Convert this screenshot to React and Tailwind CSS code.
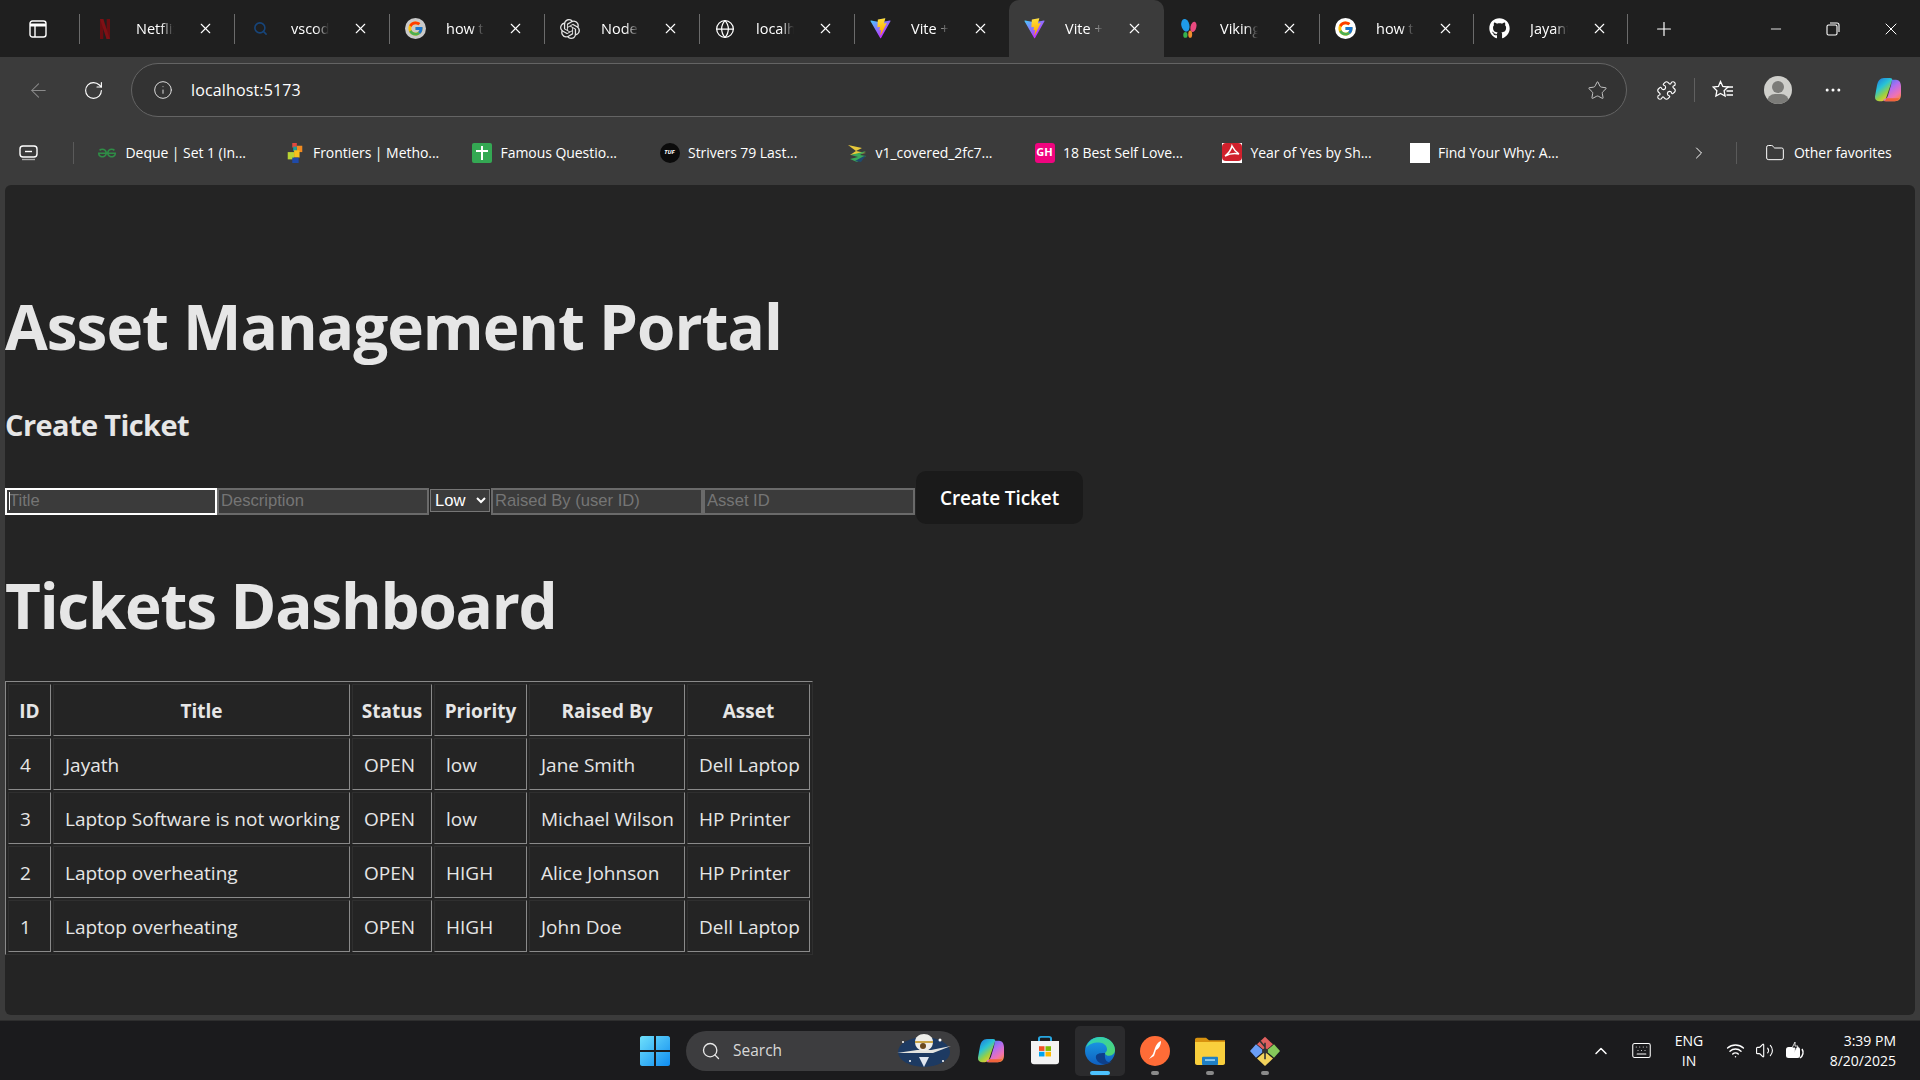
import React from "react";
import { X, Search, Globe, ArrowLeft, RotateCw, Info, Star, Puzzle, MoreHorizontal, ChevronRight, Folder, Plus, Minus, ChevronUp, Keyboard, Wifi, Volume2 } from "lucide-react";
import { FcGoogle } from "react-icons/fc";
import { FaGithub } from "react-icons/fa";
import { SiOpenai, SiGeeksforgeeks } from "react-icons/si";

const Vite = () => (
  <svg width="21" height="21" viewBox="0 0 410 404" fill="none">
    <defs>
      <linearGradient id="v1" x1="6" y1="33" x2="235" y2="344" gradientUnits="userSpaceOnUse"><stop stopColor="#41D1FF" /><stop offset="1" stopColor="#BD34FE" /></linearGradient>
      <linearGradient id="v2" x1="194" y1="8" x2="236" y2="293" gradientUnits="userSpaceOnUse"><stop stopColor="#FFEA83" /><stop offset="0.08" stopColor="#FFDD35" /><stop offset="1" stopColor="#FFA800" /></linearGradient>
    </defs>
    <path d="M399.641 59.5246L215.643 388.545C211.844 395.338 202.084 395.378 198.228 388.618L10.5817 59.5563C6.38087 52.1896 12.6802 43.2665 21.0281 44.7586L205.223 77.6824C206.398 77.8924 207.601 77.8904 208.776 77.6763L389.119 44.8058C397.439 43.2894 403.768 52.1434 399.641 59.5246Z" fill="url(#v1)" />
    <path d="M292.965 1.5744L156.801 28.2552C154.563 28.6937 152.906 30.5903 152.771 32.8664L144.395 174.33C144.198 177.662 147.258 180.248 150.51 179.498L188.42 170.749C191.967 169.931 195.172 173.055 194.443 176.622L183.18 231.775C182.422 235.487 185.907 238.661 189.532 237.56L212.947 230.446C216.577 229.344 220.065 232.527 219.297 236.242L201.398 322.875C200.278 328.294 207.486 331.249 210.492 326.603L212.5 323.5L323.454 102.072C325.312 98.3645 322.108 94.137 318.036 94.9228L279.014 102.454C275.347 103.161 272.227 99.746 273.262 96.1583L298.731 7.86689C299.767 4.27314 296.636 0.855181 292.965 1.5744Z" fill="url(#v2)" />
  </svg>
);
const Netflix = () => (
  <svg width="12" height="20" viewBox="0 0 14 24"><path d="M1 0h4v24l-4 .5z" fill="#6a0d11" /><path d="M9 0h4v24.5l-4-.5z" fill="#6a0d11" /><path d="M1 0h4l8 24.5h-4z" fill="#7f1015" /></svg>
);
const Viking = () => (
  <svg width="20" height="21" viewBox="0 0 21 26">
    <ellipse cx="6" cy="9" rx="5" ry="8" fill="#1f9be8" transform="rotate(-12 6 9)" />
    <ellipse cx="16" cy="11" rx="3.6" ry="6.5" fill="#e94a7f" transform="rotate(14 16 11)" />
    <ellipse cx="6" cy="21" rx="2.6" ry="3.6" fill="#37b24d" />
    <ellipse cx="12" cy="20" rx="2.4" ry="4.6" fill="#f08c2e" />
  </svg>
);
const Copilot = ({ w = 28, h = 25 }) => (
  <svg width={w} height={h} viewBox="0 0 28 28" preserveAspectRatio="none">
    <defs>
      <linearGradient id="c1" x1="0" y1="0" x2="0.6" y2="1"><stop stopColor="#1b6fe0" /><stop offset="0.45" stopColor="#29c3d6" /><stop offset="0.75" stopColor="#9bd13f" /><stop offset="1" stopColor="#f5c33b" /></linearGradient>
      <linearGradient id="c2" x1="0.2" y1="0" x2="0.8" y2="1"><stop stopColor="#3f7ff0" /><stop offset="0.4" stopColor="#b36df0" /><stop offset="0.75" stopColor="#f272b0" /><stop offset="1" stopColor="#f58a3c" /></linearGradient>
    </defs>
    <path d="M10 1h6c2 0 2.600 1.400 2 3l-6 19c-.6 2-2 3-4 3H5C2 26 .8 24 1 21L3 9C4 4 6 1 10 1z" fill="url(#c1)" />
    <path d="M18 3h4c3 0 5 3 5 7v9c0 4-2 7-6 7h-9c-2 0-3-1-2-2 2 0 3-1 4-4l3-11c.4-2 .6-5 1-6z" fill="url(#c2)" />
    <path d="M10 26h11c2 0 3.400-1 4.400-3l-13 0c-.6 2-1.400 3-2.400 3z" fill="#f0643c" />
  </svg>
);
const Edge = () => (
  <svg width="30" height="30" viewBox="0 0 30 32" preserveAspectRatio="none">
    <defs>
      <linearGradient id="e1" x1="0" y1="0" x2="1" y2="1"><stop stopColor="#2ad0c0" /><stop offset="1" stopColor="#52d66a" /></linearGradient>
      <linearGradient id="e2" x1="0" y1="0" x2="0" y2="1"><stop stopColor="#1aa0e8" /><stop offset="1" stopColor="#0f5fc0" /></linearGradient>
    </defs>
    <circle cx="15" cy="16" r="15" fill="url(#e2)" />
    <path d="M1 13C3 5 9 1 15 1c8 0 15 6 15 14 0 3-2 6-6 6-2 0-4-1-4-3 1-1 2-2 2-4 0-4-4-7-8-7-6 0-11 2-13 6z" fill="url(#e1)" />
    <path d="M20 18c-3 0-8 0-9 3-1 4 3 9 9 9 3 0 5-1 7-3-4 2-8 0-7-9z" fill="#0d3f8a" />
  </svg>
);
const Postman = () => (
  <svg width="30" height="30" viewBox="0 0 30 30">
    <circle cx="15" cy="15" r="15" fill="#ff6c37" />
    <path d="M21 5c-3 1-5 4-6 7l-2 6-4 5 5-3 2-6c3-1 5-5 5-9z" fill="#fff" />
  </svg>
);
const Explorer = () => (
  <svg width="30" height="28" viewBox="0 0 30 34" preserveAspectRatio="none">
    <path d="M0 3c0-1 1-2 2-2h9l3 3h16v6H0z" fill="#d8920f" />
    <path d="M0 6h30v26c0 1-1 2-2 2H2c-1 0-2-1-2-2z" fill="#f9cf3d" />
    <rect x="7" y="24" width="16" height="10" rx="1" fill="#1f7fc4" />
    <rect x="10" y="27" width="10" height="2" fill="#9ad4f5" />
  </svg>
);
const GitApp = () => (
  <svg width="30" height="30" viewBox="0 0 30 36" preserveAspectRatio="none">
    <path d="M15 1l8 9-8 8-8-8z" fill="#e0605f" />
    <path d="M6 10l8 8-8 8-6-8z" fill="#6a9ef5" />
    <path d="M24 10l6 8-6 8-8-8z" fill="#86c95a" />
    <path d="M15 19l8 8-8 9-8-9z" fill="#f3d35c" />
    <circle cx="15" cy="18" r="3" fill="#333" />
    <path d="M15 8v20M10 6l5 7" stroke="#333" strokeWidth="1.600" fill="none" />
  </svg>
);
const Store = () => (
  <svg width="30" height="29" viewBox="0 0 30 34" preserveAspectRatio="none">
    <path d="M9 7V3c0-1 1-2 2-2h8c1 0 2 1 2 2v4" fill="none" stroke="#27a6e0" strokeWidth="2" />
    <path d="M1 6h28v24c0 2-1 3-3 3H4c-2 0-3-1-3-3z" fill="#f3f3f3" />
    <rect x="9" y="12" width="5.500" height="5.500" fill="#f25022" />
    <rect x="15.500" y="12" width="5.500" height="5.500" fill="#7fba00" />
    <rect x="9" y="18.500" width="5.500" height="5.500" fill="#00a4ef" />
    <rect x="15.500" y="18.500" width="5.500" height="5.500" fill="#ffb900" />
  </svg>
);
const Windows = () => (
  <svg width="30" height="30" viewBox="0 0 30 30">
    <defs><linearGradient id="w" x1="0" y1="0" x2="1" y2="1"><stop stopColor="#6fe0fb" /><stop offset="1" stopColor="#0f8cf0" /></linearGradient></defs>
    <path d="M0 2c0-1 1-2 2-2h12v14H0zM16 0h12c1 0 2 1 2 2v12H16zM0 16h14v14H2c-1 0-2-1-2-2zM16 16h14v12c0 1-1 2-2 2H16z" fill="url(#w)" />
  </svg>
);
const Balloon = () => (
  <svg width="56" height="36" viewBox="0 0 56 36">
    <ellipse cx="28" cy="19" rx="26" ry="15" fill="#1a3a66" opacity="0.9" />
    <path d="M1 20l20-3 14 0 20-4-18 7H20z" fill="#e4e4e0" />
    <path d="M19 9c0-5 4-8 9-8s9 3 9 8c0 6-5 9-9 9s-9-3-9-9z" fill="#eeeeea" />
    <path d="M19 9h18" stroke="#c9a548" strokeWidth="2" />
    <circle cx="27" cy="13" r="3" fill="#6b4a1f" />
    <path d="M23 24h10l-5 10z" fill="#dfe6f0" />
    <circle cx="7" cy="9" r="1" fill="#fff" /><circle cx="47" cy="28" r="1" fill="#fff" /><circle cx="14" cy="28" r="1" fill="#fff" /><circle cx="44" cy="7" r="1.500" fill="#fff" />
  </svg>
);

const tabs = [
  { icon: <Netflix />, label: "Netflix" },
  { icon: <Search size={15} strokeWidth={2.5} className="text-[#17457a]" />, label: "vscode" },
  { icon: <span className="flex w-[21px] h-[21px] items-center justify-center rounded-full bg-[#c9c9c9]"><FcGoogle size={17} /></span>, label: "how to" },
  { icon: <SiOpenai size={20} className="text-[#e4e4e4]" />, label: "Node.js" },
  { icon: <Globe size={20} strokeWidth={1.5} className="text-white" />, label: "localhost" },
  { icon: <Vite />, label: "Vite + React" },
  { icon: <Vite />, label: "Vite + React", active: true },
  { icon: <Viking />, label: "Viking" },
  { icon: <span className="flex w-[21px] h-[21px] items-center justify-center rounded-full bg-white"><FcGoogle size={17} /></span>, label: "how to" },
  { icon: <FaGithub size={21} className="text-white" />, label: "Jayanth" },
];

const Tab = ({ icon, label, active, w = "w-[154px]" }) => (
  <div className={w + (active ? " flex h-[57px] shrink-0 items-center rounded-t-[10px] bg-[#3b3b3b]" : " flex h-[57px] shrink-0 items-center")}>
    <span className="flex w-[50px] shrink-0 justify-center">{icon}</span>
    <span className="ml-[6px] w-[38px] overflow-hidden whitespace-nowrap text-[14.5px] text-white [mask-image:linear-gradient(to_right,#000_65%,transparent)]">{label}</span>
    <X size={17} strokeWidth={1.6} className="ml-[23px] text-white" />
  </div>
);
const Sep = () => <div className="h-[30px] w-px shrink-0 bg-[#6b6b6b]" />;

const bookmarks = [
  { icon: <SiGeeksforgeeks size={18} className="text-[#2f8d46]" />, label: "Deque | Set 1 (In..." },
  { icon: <svg width="18" height="20" viewBox="0 0 18 22"><rect x="6" y="0" width="5" height="5" fill="#e2483d" /><rect x="11" y="3" width="6" height="7" fill="#f18a1f" /><rect x="7" y="4" width="4" height="5" fill="#1e9f9a" /><rect x="1" y="10" width="7" height="8" fill="#b8d334" /><rect x="8" y="8" width="6" height="8" fill="#f7c11d" /><rect x="6" y="16" width="7" height="6" fill="#1f4aa8" /></svg>, label: "Frontiers | Metho..." },
  { icon: <span className="relative flex h-5 w-5 items-center justify-center rounded-[2px] bg-[#34a853]"><span className="absolute h-[14px] w-[2px] bg-white" /><span className="absolute top-[7px] h-[2px] w-[12px] bg-white" /></span>, label: "Famous Questio..." },
  { icon: <span className="flex h-5 w-5 items-center justify-center rounded-full bg-[#0b0b0b] text-[6px] font-bold italic text-white">TUF</span>, label: "Strivers 79 Last..." },
  { icon: <svg width="20" height="20" viewBox="0 0 20 20"><path d="M1 2l14 3-6 3 10 2-16 2 6-4z" fill="#e8c93a" /><path d="M19 8L4 12l7 2-8 2 7 3 9-6-6-1z" fill="#3aa85a" /><path d="M8 18l11-6-5 7z" fill="#1f4a6e" /></svg>, label: "v1_covered_2fc7..." },
  { icon: <span className="flex h-5 w-5 items-center justify-center rounded-[3px] bg-[#f0047f] text-[11px] font-bold text-white">GH</span>, label: "18 Best Self Love..." },
  { icon: <svg width="20" height="20" viewBox="0 0 20 20"><rect width="20" height="20" fill="#fff" /><rect y="0" width="20" height="18" rx="4" fill="#d0202c" /><path d="M10 3c-1 4-3 7-7 10 4-2 9-3 14-2-3-2-5-4-7-8z" fill="none" stroke="#fff" strokeWidth="1.500" /></svg>, label: "Year of Yes by Sh..." },
  { icon: <span className="block h-5 w-5 bg-white" />, label: "Find Your Why: A..." },
];

const rows = [
  ["4", "Jayath", "OPEN", "low", "Jane Smith", "Dell Laptop"],
  ["3", "Laptop Software is not working", "OPEN", "low", "Michael Wilson", "HP Printer"],
  ["2", "Laptop overheating", "OPEN", "HIGH", "Alice Johnson", "HP Printer"],
  ["1", "Laptop overheating", "OPEN", "HIGH", "John Doe", "Dell Laptop"],
];
const heads = [
  ["ID", "w-[43px]"],
  ["Title", "w-[297px]"],
  ["Status", "w-[80px]"],
  ["Priority", "w-[93px]"],
  ["Raised By", "w-[156px]"],
  ["Asset", "w-[123px]"],
];

const cell = "h-[52px] border border-t-[#2f2f2f] border-l-[#2f2f2f] border-b-[#8a8a8a] border-r-[#8a8a8a] p-0 pt-[2px] pl-[11px] pr-[4px] whitespace-nowrap";
const inputCls = "h-[27px] w-[212px] shrink-0 mt-[17px] border-2 border-[#6a6a6a] bg-[#3b3b3b] px-[2px] pb-[2px] text-[16.6px] text-white outline-none placeholder:text-[#757575] [font-family:'Liberation_Sans',Arial,sans-serif]";

export default function App() {
  return (
    <div className="flex h-[1080px] w-[1920px] flex-col overflow-hidden bg-[#3b3b3b] text-white [font-family:'Open_Sans','Noto_Sans',sans-serif]">
      {/* tab strip */}
      <div className="flex h-[57px] shrink-0 items-center bg-[#1f1f1f]">
        <div className="flex w-[79px] shrink-0 justify-center pr-[3px]">
          <svg width="18" height="18" viewBox="0 0 18 18" fill="none" stroke="#fff" strokeWidth="1.400"><rect x="1" y="1" width="16" height="16" rx="2.500" /><path d="M1 5h16" strokeWidth="3" /><path d="M6 5v12" /></svg>
        </div>
        <Sep />
        {tabs.slice(0, 5).map((t, i) => (
          <React.Fragment key={i}><Tab {...t} /><Sep /></React.Fragment>
        ))}
        <Tab {...tabs[5]} />
        <Tab {...tabs[6]} w="w-[155px]" />
        <Tab {...tabs[7]} w="w-[155px]" />
        <Sep />
        <Tab {...tabs[8]} w="w-[153px]" />
        <Sep />
        <Tab {...tabs[9]} w="w-[153px]" />
        <Sep />
        <Plus size={22} strokeWidth={1.3} className="ml-[25px] text-white" />
        <div className="ml-auto flex items-center">
          <Minus size={16} strokeWidth={1.3} className="mr-[42px]" />
          <svg width="14" height="14" viewBox="0 0 14 14" fill="none" stroke="#fff" strokeWidth="1.100" className="mr-[41px]"><rect x="1" y="3" width="10" height="10" rx="1.500" /><path d="M4 1h7c1 0 2 1 2 2v7" /></svg>
          <X size={20} strokeWidth={1.2} className="mr-[19px]" />
        </div>
      </div>

      {/* toolbar */}
      <div className="flex h-[69px] shrink-0 items-center pb-[3px]">
        <div className="flex w-[76px] shrink-0 justify-center"><ArrowLeft size={23} strokeWidth={1.1} className="text-[#8a8a8a]" /></div>
        <div className="flex w-[35px] shrink-0 justify-center"><RotateCw size={21} strokeWidth={1.3} className="text-white" /></div>
        <div className="ml-[20px] flex h-[54px] w-[1496px] shrink-0 items-center rounded-full border border-[#646464] bg-[#333333]">
          <Info size={20} strokeWidth={1.2} className="ml-[21px] text-[#dcdcdc]" />
          <span className="ml-[18px] text-[16px] tracking-[0.15px] text-white">localhost:5173</span>
          <Star size={21} strokeWidth={1.1} className="ml-auto mr-[18px] text-[#c9c9c9]" />
        </div>
        <Puzzle size={21} strokeWidth={1.3} className="ml-[29px] text-white" />
        <div className="ml-[17px] h-[24px] w-px bg-[#606060]" />
        <svg width="22" height="20" viewBox="0 0 22 20" fill="none" stroke="#fff" strokeWidth="1.300" className="ml-[17px]">
          <path d="M8.500 1.500l2.300 5 5.200.6-3.900 3.600 1 5.300-4.600-2.600-4.600 2.600 1-5.300L1.200 7.100l5.200-.6z" />
          <path d="M15 7h6M14.500 11h6.500M14.500 15h6.500" />
        </svg>
        <span className="relative ml-[30px] block h-[28px] w-[28px] overflow-hidden rounded-full bg-[#cfcfcb]">
          <span className="absolute left-[8px] top-[5px] h-[12px] w-[12px] rounded-full bg-[#7b7b78]" />
          <span className="absolute left-[3px] top-[18px] h-[16px] w-[22px] rounded-full bg-[#7b7b78]" />
        </span>
        <MoreHorizontal size={20} strokeWidth={1.6} className="ml-[31px] text-white" />
        <span className="ml-[31px]"><Copilot w={28} h={26} /></span>
      </div>

      {/* favorites */}
      <div className="flex h-[59px] shrink-0 items-center pb-[6px]">
        <div className="flex w-[57px] shrink-0 justify-center">
          <svg width="20" height="16" viewBox="0 0 20 16" fill="none" stroke="#fff" strokeWidth="1.400"><rect x="1" y="1" width="17" height="11" rx="3" /><path d="M6 6.500h7" /><path d="M3 14.500h13" stroke="#aaa" /></svg>
        </div>
        <div className="ml-[16px] h-[22px] w-px bg-[#5a5a5a]" />
        <div className="ml-[23px] flex">
          {bookmarks.map((b, i) => (
            <div key={i} className="flex w-[187.5px] shrink-0 items-center">
              <span className="flex w-[20px] shrink-0 justify-center">{b.icon}</span>
              <span className="ml-[8.5px] whitespace-nowrap text-[14px] tracking-[-0.05px] text-white">{b.label}</span>
            </div>
          ))}
        </div>
        <ChevronRight size={20} strokeWidth={1.2} className="ml-[92px] text-white" />
        <div className="ml-[27px] h-[22px] w-px bg-[#5a5a5a]" />
        <Folder size={20} strokeWidth={1.2} className="ml-[28px] text-white" />
        <span className="ml-[9px] whitespace-nowrap text-[14px] tracking-[-0.05px] text-white">Other favorites</span>
      </div>

      {/* page */}
      <div className="mx-[5px] h-[830px] shrink-0 overflow-hidden rounded-[6px] bg-[#242424] text-[#e6e6e6]">
        <h1 className="mt-[106px] h-[70px] whitespace-nowrap text-[62px] font-bold leading-[70px] tracking-[-1px]">Asset Management Portal</h1>
        <h2 className="mt-[44px] h-[40px] text-[29px] font-bold leading-[40px] tracking-[-0.6px]">Create Ticket</h2>
        <form className="mt-[26px] flex h-[53px] items-start">
          <div className="relative shrink-0">
            <input placeholder="Title" className={inputCls + " border-white"} />
            <span className="absolute left-[4px] top-[21px] h-[18px] w-px bg-white" />
          </div>
          <input placeholder="Description" className={inputCls} />
          <select className="ml-[1px] mt-[18px] h-[23px] w-[60px] shrink-0 border border-[#767676] bg-[#3b3b3b] text-[16.6px] text-white [color-scheme:dark] [font-family:'Liberation_Sans',Arial,sans-serif]">
            <option>Low</option>
          </select>
          <input placeholder="Raised By (user ID)" className={inputCls + " ml-[1px]"} />
          <input placeholder="Asset ID" className={inputCls} />
          <button type="button" className="ml-[1px] h-[53px] w-[167px] shrink-0 rounded-[10px] bg-[#1a1a1a] pt-[2px] text-[19px] font-semibold tracking-[-0.1px] text-white">Create Ticket</button>
        </form>
        <h1 className="mt-[46px] h-[70px] whitespace-nowrap text-[62px] font-bold leading-[70px] tracking-[-1.26px]">Tickets Dashboard</h1>
        <table className="mt-[41px] w-[808px] table-fixed border-separate border border-t-[#8a8a8a] border-l-[#8a8a8a] border-b-[#2f2f2f] border-r-[#2f2f2f] text-[19px] [border-spacing:2px]">
          <thead>
            <tr>
              {heads.map(([h, w]) => (
                <th key={h} className={cell + " !pl-0 !pr-0 text-center font-bold " + w}>{h}</th>
              ))}
            </tr>
          </thead>
          <tbody>
            {rows.map((r) => (
              <tr key={r[0]}>
                {r.map((c, i) => (
                  <td key={i} className={cell + " text-left"}>{c}</td>
                ))}
              </tr>
            ))}
          </tbody>
        </table>
      </div>

      {/* taskbar */}
      <div className="mt-[5px] flex h-[60px] shrink-0 items-center border-t border-[#2e2e2e] bg-[#1b1b1d]">
        <span className="ml-[640px] flex w-[30px] justify-center"><Windows /></span>
        <div className="ml-[16px] flex h-[40px] w-[274px] shrink-0 items-center rounded-full bg-[#3d3d3f]">
          <Search size={20} strokeWidth={1.6} className="ml-[15px] text-[#e8e8e8]" />
          <span className="ml-[12px] text-[15.5px] text-[#d8d8d8]">Search</span>
          <span className="ml-auto mr-[8px]"><Balloon /></span>
        </div>
        <span className="ml-[16px] flex w-[30px] justify-center"><Copilot w={28} h={26} /></span>
        <span className="ml-[24px] flex w-[30px] justify-center"><Store /></span>
        <div className="relative ml-[15px] flex h-[50px] w-[50px] shrink-0 items-center justify-center rounded-[5px] bg-[#2b2b2d]">
          <Edge />
          <span className="absolute bottom-[1px] h-[4px] w-[20px] rounded-full bg-[#4cc2ff]" />
        </div>
        <div className="relative ml-[15px] flex h-[50px] w-[30px] shrink-0 items-center justify-center">
          <Postman />
          <span className="absolute bottom-[1px] h-[4px] w-[8px] rounded-full bg-[#8a8a8a]" />
        </div>
        <div className="relative ml-[25px] flex h-[50px] w-[30px] shrink-0 items-center justify-center">
          <Explorer />
          <span className="absolute bottom-[1px] h-[4px] w-[8px] rounded-full bg-[#8a8a8a]" />
        </div>
        <div className="relative ml-[25px] flex h-[50px] w-[30px] shrink-0 items-center justify-center">
          <GitApp />
          <span className="absolute bottom-[1px] h-[4px] w-[8px] rounded-full bg-[#8a8a8a]" />
        </div>
        <ChevronUp size={20} strokeWidth={1.8} className="ml-[311px] text-white" />
        <Keyboard size={21} strokeWidth={1.2} className="ml-[20px] text-white" />
        <div className="ml-[12px] flex w-[50px] flex-col items-center text-[14px] leading-[20px] text-white"><span>ENG</span><span>IN</span></div>
        <Wifi size={19} strokeWidth={1.8} className="ml-[12px] text-white" />
        <Volume2 size={19} strokeWidth={1.4} className="ml-[10px] text-white" />
        <svg width="20" height="20" viewBox="0 0 20 20" className="ml-[11px]" fill="#fff"><rect x="1" y="6" width="14" height="11" rx="2.500" /><path d="M17 8c2 3 1 7-2 9" stroke="#fff" fill="none" strokeWidth="1.500" /><path d="M10 1l-3 6h3l-1 5 4-7h-3z" fill="#1b1b1d" stroke="#fff" strokeWidth="0.800" /></svg>
        <div className="ml-auto mr-[24px] flex flex-col items-end text-[14px] leading-[20px] text-white"><span>3:39 PM</span><span>8/20/2025</span></div>
      </div>
    </div>
  );
}
